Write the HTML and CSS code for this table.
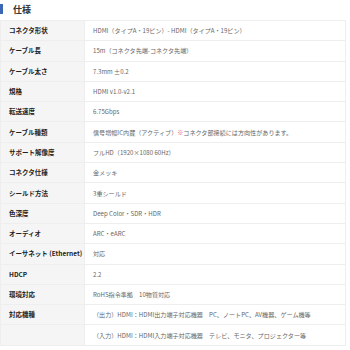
FILE: index.html
```html
<!DOCTYPE html>
<html lang="ja">
<head>
<meta charset="utf-8">
<link rel="stylesheet" href="styles.css">
</head>
<body>
<h2 class="heading">仕様</h2>
<table class="spec">
<tr><th>コネクタ形状</th><td>HDMI（タイプA・19ピン）- HDMI（タイプA・19ピン）</td></tr>
<tr><th>ケーブル長</th><td>15m（コネクタ先端-コネクタ先端）</td></tr>
<tr><th>ケーブル太さ</th><td>7.3mm ±0.2</td></tr>
<tr><th>規格</th><td>HDMI v1.0-v2.1</td></tr>
<tr><th>転送速度</th><td>6.75Gbps</td></tr>
<tr><th>ケーブル種類</th><td>信号増幅IC内蔵（アクティブ）<span class="note">※</span>コネクタ部接続には方向性があります。</td></tr>
<tr><th>サポート解像度</th><td>フルHD（1920×1080 60Hz）</td></tr>
<tr><th>コネクタ仕様</th><td>金メッキ</td></tr>
<tr><th>シールド方法</th><td>3重シールド</td></tr>
<tr><th>色深度</th><td>Deep Color・SDR・HDR</td></tr>
<tr><th>オーディオ</th><td>ARC・eARC</td></tr>
<tr><th>イーサネット (Ethernet)</th><td>対応</td></tr>
<tr><th>HDCP</th><td>2.2</td></tr>
<tr><th>環境対応</th><td>RoHS指令準拠　10物質対応</td></tr>
<tr><th>対応機種</th><td>（出力）HDMI：HDMI出力端子対応機器　PC、ノートPC、AV機器、ゲーム機等</td></tr>
<tr><th></th><td>（入力）HDMI：HDMI入力端子対応機器　テレビ、モニタ、プロジェクター等</td></tr>
</table>
</body>
</html>
```
FILE: styles.css
```css
html, body {
  margin: 0;
  padding: 0;
  background: #fff;
}
body {
  font-family: "Noto Sans CJK JP", "Noto Sans", sans-serif;
  color: #333;
}
.heading {
  display: flex;
  align-items: center;
  height: 10px;
  margin: 4px 0 6px;
  padding-left: 10px;
  border-left: 3px solid #3c67b5;
  font-size: 9px;
  font-weight: bold;
  color: #333;
}
.spec {
  width: 346px;
  border-collapse: collapse;
  table-layout: fixed;
}
.spec tr {
  height: 20.3px;
}
.spec th, .spec td {
  border: 1px solid #eee;
  padding: 0 4px 0 8px;
  line-height: 9px;
  white-space: nowrap;
  overflow: hidden;
  text-align: left;
  vertical-align: middle;
}
.spec th {
  width: 71px;
  background: #f5f5f5;
  font-size: 6.5px;
  font-weight: bold;
  color: #222;
}
.spec td {
  font-size: 6.1px;
  color: #666;
  padding-left: 8px;
}
.note {
  color: #e06060;
}
```
